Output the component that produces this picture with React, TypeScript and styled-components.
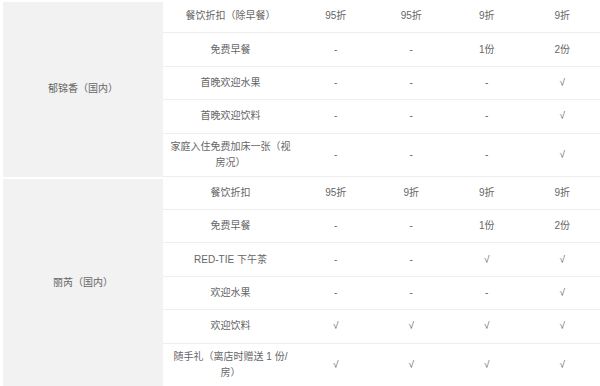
import React from "react";
import styled, { createGlobalStyle } from "styled-components";

interface Row {
  item: string;
  values: string[];
}

interface Group {
  name: string;
  rows: Row[];
}

const groups: Group[] = [
  {
    name: "郁锦香（国内）",
    rows: [
      { item: "餐饮折扣（除早餐）", values: ["95折", "95折", "9折", "9折"] },
      { item: "免费早餐", values: ["-", "-", "1份", "2份"] },
      { item: "首晚欢迎水果", values: ["-", "-", "-", "√"] },
      { item: "首晚欢迎饮料", values: ["-", "-", "-", "√"] },
      { item: "家庭入住免费加床一张（视房况）", values: ["-", "-", "-", "√"] },
    ],
  },
  {
    name: "丽芮（国内）",
    rows: [
      { item: "餐饮折扣", values: ["95折", "9折", "9折", "9折"] },
      { item: "免费早餐", values: ["-", "-", "1份", "2份"] },
      { item: "RED-TIE 下午茶", values: ["-", "-", "√", "√"] },
      { item: "欢迎水果", values: ["-", "-", "-", "√"] },
      { item: "欢迎饮料", values: ["√", "√", "√", "√"] },
      { item: "随手礼（离店时赠送 1 份/房）", values: ["√", "√", "√", "√"] },
    ],
  },
];

const colWidths = [161, 135, 75.5, 75.5, 75.5, 75.5];

const GlobalStyle = createGlobalStyle`
  html, body {
    margin: 0;
    padding: 0;
    background: #fff;
  }
`;

const Wrapper = styled.div`
  padding-left: 2px;
  width: 598px;
`;

const Table = styled.table`
  width: 598px;
  border-collapse: separate;
  border-spacing: 0;
  table-layout: fixed;
  font-family: "Liberation Sans", "Noto Sans CJK SC", sans-serif;
  font-size: 10px;
  line-height: 16px;
  color: #666;
`;

const Col = styled.col<{ $width: number }>`
  width: ${(p) => p.$width}px;
`;

const Cell = styled.td`
  box-sizing: border-box;
  height: 33.4px;
  padding: 5px 6px;
  text-align: center;
  vertical-align: middle;
  border-bottom: 1px solid #eeeeee;
`;

const GroupCell = styled.td`
  box-sizing: border-box;
  background: #f2f2f2;
  text-align: center;
  vertical-align: middle;
  padding: 0 6px;
  border-top: 2px solid #fff;
  border-left: 1px solid #fff;
`;

const ItemCell = styled(Cell)`
  padding: 5px 6.5px;
`;

const ValueCell = styled(Cell)``;

export default function App() {
  return (
    <>
      <GlobalStyle />
      <Wrapper>
        <Table>
          <colgroup>
            {colWidths.map((w, i) => (
              <Col key={i} $width={w} />
            ))}
          </colgroup>
          <tbody>
            {groups.map((group) =>
              group.rows.map((row, i) => (
                <tr key={group.name + i}>
                  {i === 0 && (
                    <GroupCell rowSpan={group.rows.length}>{group.name}</GroupCell>
                  )}
                  <ItemCell>{row.item}</ItemCell>
                  {row.values.map((v, j) => (
                    <ValueCell key={j}>{v}</ValueCell>
                  ))}
                </tr>
              ))
            )}
          </tbody>
        </Table>
      </Wrapper>
    </>
  );
}
